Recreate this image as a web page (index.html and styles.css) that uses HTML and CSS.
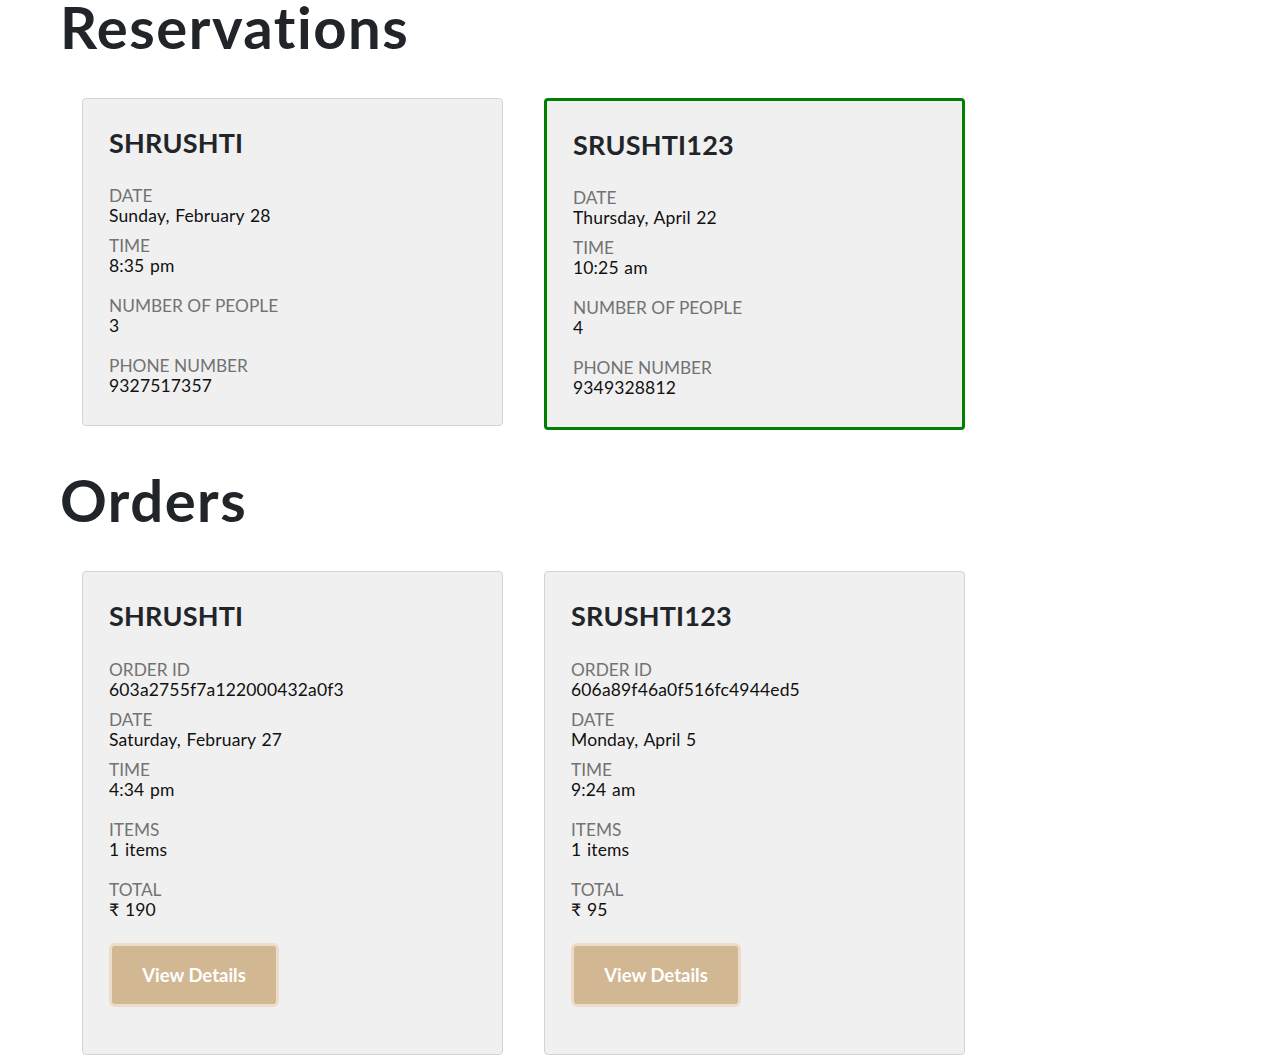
FILE: index.html
```html
<!DOCTYPE html>
<html lang="en">
<head>
<meta charset="utf-8">
<title>Reservations and Orders</title>
<link rel="stylesheet" href="styles.css">
</head>
<body>
<main class="page">
  <section class="section">
    <h1 class="title">Reservations</h1>
    <div class="cards">
      <div class="card">
        <h3 class="name">SHRUSHTI</h3>
        <div class="field tight"><div class="label">DATE</div><div class="value">Sunday, February 28</div></div>
        <div class="field"><div class="label">TIME</div><div class="value">8:35 pm</div></div>
        <div class="field"><div class="label">NUMBER OF PEOPLE</div><div class="value">3</div></div>
        <div class="field last"><div class="label">PHONE NUMBER</div><div class="value">9327517357</div></div>
      </div>
      <div class="card active">
        <h3 class="name">SRUSHTI123</h3>
        <div class="field tight"><div class="label">DATE</div><div class="value">Thursday, April 22</div></div>
        <div class="field"><div class="label">TIME</div><div class="value">10:25 am</div></div>
        <div class="field"><div class="label">NUMBER OF PEOPLE</div><div class="value">4</div></div>
        <div class="field last"><div class="label">PHONE NUMBER</div><div class="value">9349328812</div></div>
      </div>
    </div>
  </section>
  <section class="section">
    <h1 class="title">Orders</h1>
    <div class="cards">
      <div class="card">
        <h3 class="name">SHRUSHTI</h3>
        <div class="field tight"><div class="label">ORDER ID</div><div class="value">603a2755f7a122000432a0f3</div></div>
        <div class="field tight"><div class="label">DATE</div><div class="value">Saturday, February 27</div></div>
        <div class="field"><div class="label">TIME</div><div class="value">4:34 pm</div></div>
        <div class="field"><div class="label">ITEMS</div><div class="value">1 items</div></div>
        <div class="field last"><div class="label">TOTAL</div><div class="value">₹ 190</div></div>
        <button class="btn">View Details</button>
      </div>
      <div class="card">
        <h3 class="name">SRUSHTI123</h3>
        <div class="field tight"><div class="label">ORDER ID</div><div class="value">606a89f46a0f516fc4944ed5</div></div>
        <div class="field tight"><div class="label">DATE</div><div class="value">Monday, April 5</div></div>
        <div class="field"><div class="label">TIME</div><div class="value">9:24 am</div></div>
        <div class="field"><div class="label">ITEMS</div><div class="value">1 items</div></div>
        <div class="field last"><div class="label">TOTAL</div><div class="value">₹ 95</div></div>
        <button class="btn">View Details</button>
      </div>
    </div>
  </section>
</main>
</body>
</html>
```

FILE: styles.css
```css
* { box-sizing: border-box; }
html, body { margin: 0; padding: 0; background: #fff; }
body {
  font-family: Lato, "DejaVu Sans", sans-serif;
  color: #212529;
}
.page {
  padding-left: 60px;
}
.section {
  margin-bottom: 43px;
}
.title {
  margin: 0 0 45px 0;
  font-size: 58px;
  line-height: 53px;
  font-weight: 700;
  letter-spacing: 1.5px;
  color: #212529;
}
.cards {
  display: flex;
  align-items: flex-start;
  gap: 41px;
  margin-left: 22px;
}
.card {
  width: 421px;
  background: #f0f0f0;
  border: 1px solid #d4d4d4;
  border-radius: 4px;
  padding: 26px 26px 29px 26px;
}
.card.active {
  border: 3px solid #008000;
}
.name {
  margin: 2px 0 27px 0;
  font-size: 27px;
  line-height: 1.2;
  font-weight: 700;
  color: #212529;
  letter-spacing: 0.2px;
}
.field {
  margin-bottom: 20px;
  line-height: 20px;
}
.field.tight { margin-bottom: 10px; }
.field.last { margin-bottom: 0; }
.label {
  font-size: 17.3px;
  color: #737373;
}
.value {
  font-size: 17.5px;
  letter-spacing: 0.15px;
  word-spacing: 1px;
  color: #111;
}
.btn {
  display: block;
  margin: 26px 0 21px 3px;
  width: 164px;
  height: 58px;
  border: none;
  border-radius: 3px;
  background: #d2b793;
  box-shadow: 0 0 0 3px #ecdcc9;
  color: #fff;
  font-family: Lato, "DejaVu Sans", sans-serif;
  font-size: 18.5px;
  font-weight: 700;
  cursor: pointer;
}
```
